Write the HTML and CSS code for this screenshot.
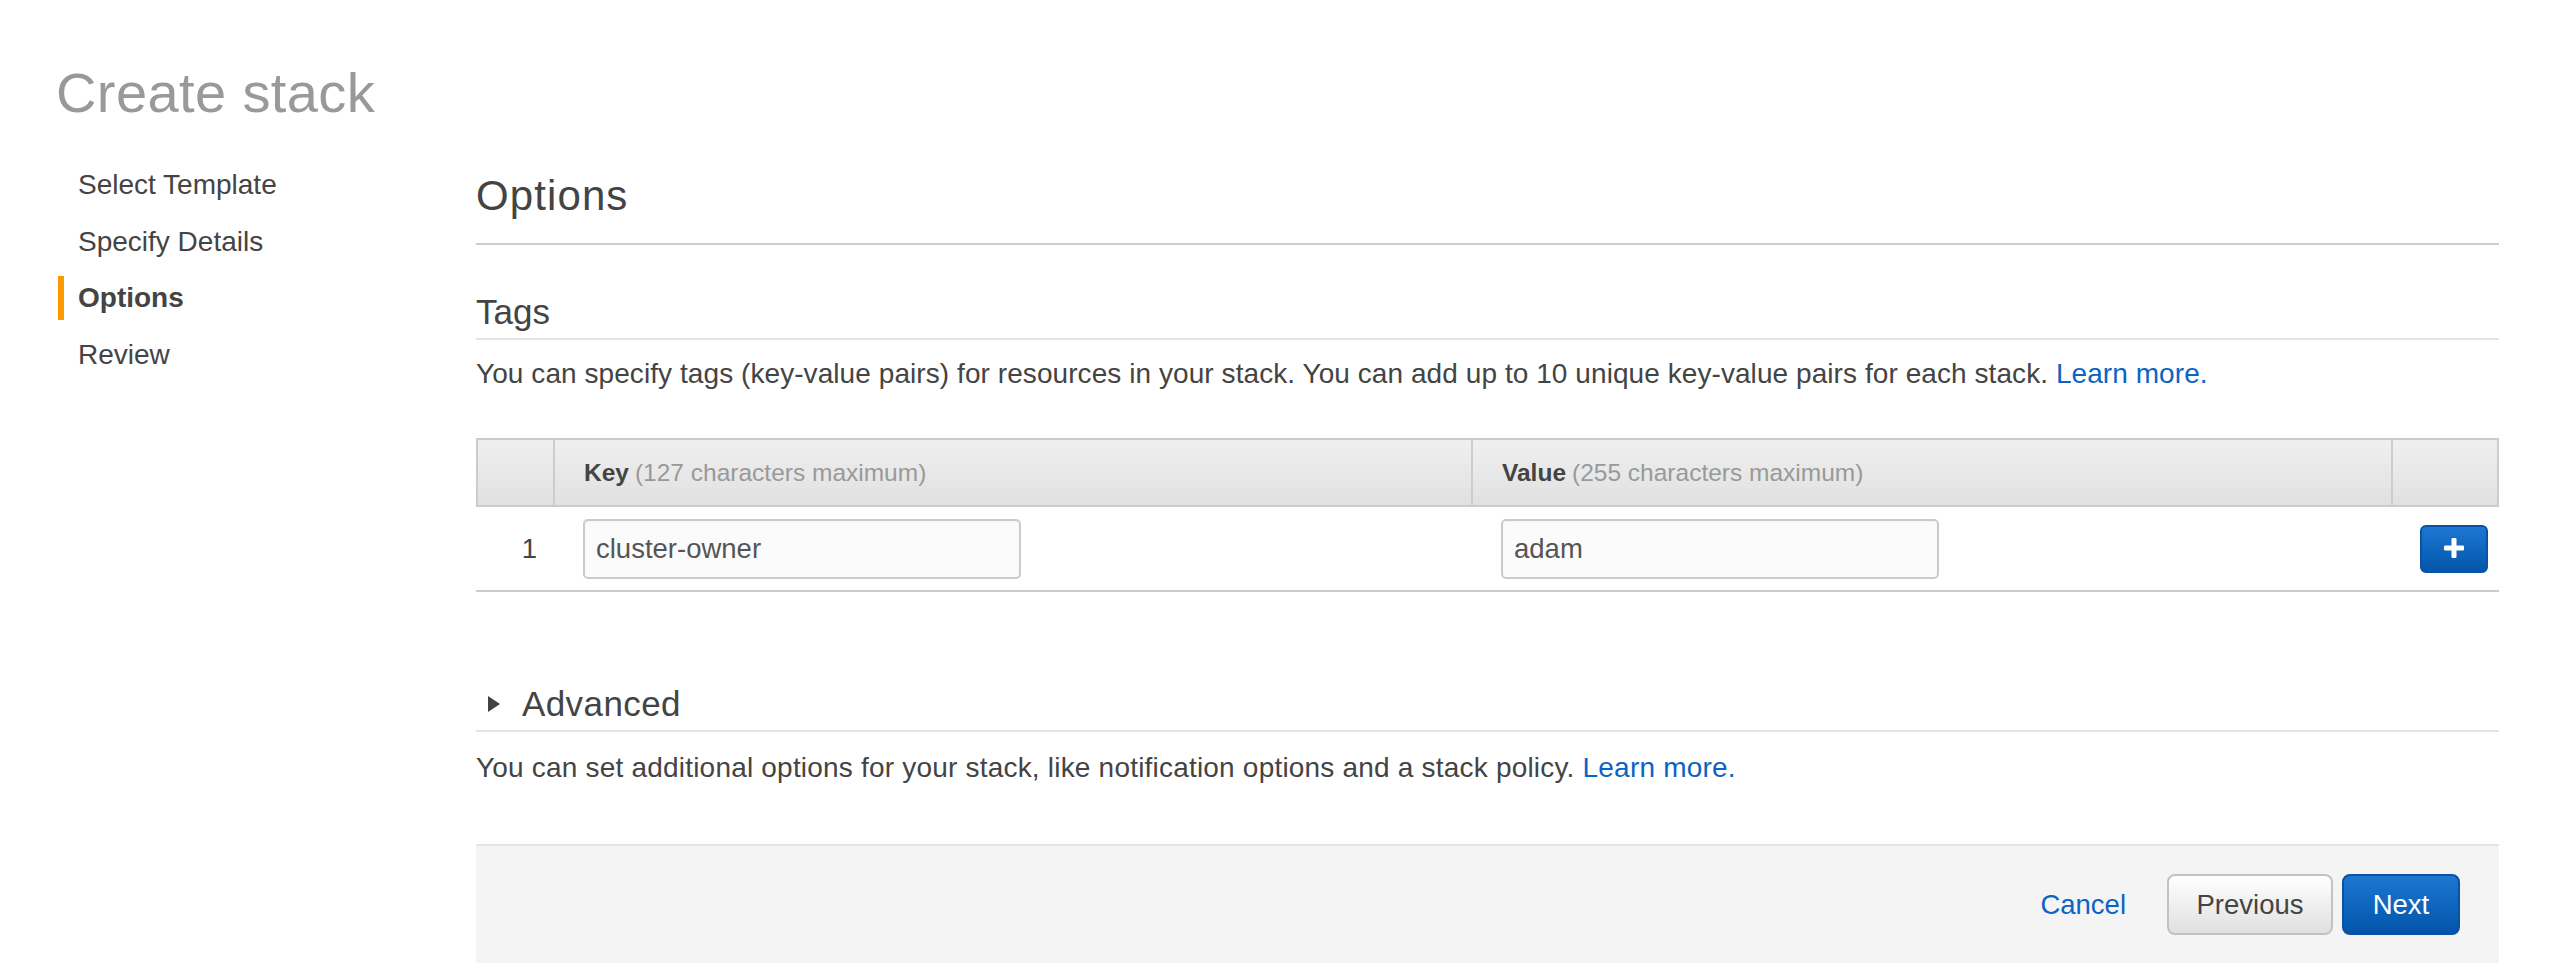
FILE: index.html
```html
<!DOCTYPE html>
<html lang="en">
<head>
<meta charset="utf-8">
<title>Create stack</title>
<link rel="stylesheet" href="styles.css">
</head>
<body>
<div class="page">
  <h1 class="page-title">Create stack</h1>
  <div class="layout">
    <nav class="steps">
      <div class="step">Select Template</div>
      <div class="step">Specify Details</div>
      <div class="step active">Options</div>
      <div class="step">Review</div>
    </nav>
    <main class="content">
      <h2 class="section-title">Options</h2>

      <h3 class="sub-title">Tags</h3>
      <p class="desc desc-tags">You can specify tags (key-value pairs) for resources in your stack. You can add up to 10 unique key-value pairs for each stack. <a href="#" class="link">Learn more.</a></p>

      <div class="tags">
        <div class="tags-head">
          <div class="hcell"></div>
          <div class="hcell"><b>Key</b> <span class="hint">(127 characters maximum)</span></div>
          <div class="hcell"><b>Value</b> <span class="hint">(255 characters maximum)</span></div>
          <div class="hcell"></div>
        </div>
        <div class="tags-row">
          <div class="rcell num">1</div>
          <div class="rcell field"><input class="text-input" type="text" value="cluster-owner"></div>
          <div class="rcell field"><input class="text-input" type="text" value="adam"></div>
          <div class="rcell add">
            <button class="btn-add" type="button" aria-label="Add tag">
              <svg width="20" height="20" viewBox="0 0 20 20"><rect x="7.5" y="0" width="5" height="20" rx="1.2" fill="#fff"/><rect x="0" y="7.5" width="20" height="5" rx="1.2" fill="#fff"/></svg>
            </button>
          </div>
        </div>
      </div>

      <h3 class="sub-title advanced"><span class="caret"></span>Advanced</h3>
      <p class="desc desc-adv">You can set additional options for your stack, like notification options and a stack policy. <a href="#" class="link">Learn more.</a></p>

      <div class="footer">
        <a href="#" class="link cancel">Cancel</a>
        <button class="btn btn-secondary" type="button">Previous</button>
        <button class="btn btn-primary" type="button">Next</button>
      </div>
    </main>
  </div>
</div>
</body>
</html>
```

FILE: styles.css
```css
* { box-sizing: border-box; }

html, body {
  margin: 0;
  padding: 0;
  background: #fff;
}

body {
  font-family: "Liberation Sans", Arial, Helvetica, sans-serif;
  color: #444;
  font-size: 27.5px;
}

.page {
  padding: 61px 57px 0 58px;
}

.page-title {
  margin: 0 0 0 -2px;
  font-size: 56px;
  line-height: 64px;
  font-weight: normal;
  color: #999;
  letter-spacing: 0.4px;
}

.layout {
  display: flex;
  align-items: flex-start;
}

.steps {
  width: 418px;
  flex: none;
  padding-top: 32px;
}

.step {
  display: flex;
  align-items: center;
  gap: 14px;
  height: 56.5px;
  font-size: 28px;
  line-height: 56.5px;
  color: #444;
}

.step::before {
  content: "";
  display: block;
  width: 6px;
  height: 44px;
  background: transparent;
  flex: none;
}

.step.active {
  font-weight: bold;
}

.step.active::before {
  background: #f90;
}

.content {
  flex: 1;
  min-width: 0;
}

.section-title {
  margin: 46px 0 0;
  font-size: 42px;
  line-height: 50px;
  font-weight: normal;
  color: #444;
  letter-spacing: 1.1px;
  padding-bottom: 22px;
  border-bottom: 2px solid #cdcdcd;
}

.sub-title {
  margin: 46px 0 0;
  font-size: 35px;
  line-height: 42px;
  font-weight: normal;
  color: #444;
  padding-bottom: 5px;
  border-bottom: 2px solid #e4e4e4;
}

.desc {
  margin: 13.5px 0 0;
  font-size: 28px;
  line-height: 40px;
  color: #444;
}

.desc-tags {
  letter-spacing: 0.07px;
}

.link {
  color: #0b64c4;
  text-decoration: none;
}

/* Tags table */
.tags {
  margin-top: 44.5px;
}

.tags-head {
  display: grid;
  grid-template-columns: 75px 918px 920px 1fr;
  border: 2px solid #cccccc;
  background: linear-gradient(#efefef, #e1e1e1);
  height: 69px;
}

.hcell {
  display: flex;
  align-items: center;
  padding-left: 29px;
  font-size: 24.5px;
  color: #999;
  white-space: nowrap;
}

.hcell + .hcell {
  border-left: 2px solid #cccccc;
}

.hcell b {
  color: #444;
  margin-right: 6px;
}

.tags-row {
  display: grid;
  grid-template-columns: 77px 918px 920px 1fr;
  height: 85px;
  border-bottom: 2px solid #cccccc;
  align-items: center;
}

.rcell.num {
  text-align: right;
  padding-right: 16px;
  font-size: 27.5px;
  color: #444;
}

.rcell.field {
  padding-left: 30px;
  display: flex;
  align-items: center;
}

.text-input {
  width: 438px;
  height: 60px;
  border: 2px solid #cbcbcb;
  border-radius: 5px;
  background: #fbfbfb;
  box-shadow: inset 0 1px 2px rgba(0, 0, 0, 0.04);
  padding: 0 11px;
  font-family: "Liberation Sans", Arial, Helvetica, sans-serif;
  font-size: 27.5px;
  color: #555;
  outline: none;
}

.rcell.add {
  display: flex;
  justify-content: flex-end;
  padding-right: 11px;
}

.btn-add {
  width: 68px;
  height: 48px;
  border: 2px solid #0a52a3;
  border-radius: 6px;
  background: linear-gradient(#1d77d3, #0255aa);
  display: flex;
  align-items: center;
  justify-content: center;
  padding: 0;
  cursor: pointer;
}

.btn-add svg {
  display: block;
  margin-top: -2px;
}

/* Advanced */
.sub-title.advanced {
  margin-top: 91px;
  display: flex;
  align-items: center;
  letter-spacing: 0.4px;
}

.caret {
  display: block;
  width: 0;
  height: 0;
  border-left: 12px solid #444;
  border-top: 8px solid transparent;
  border-bottom: 8px solid transparent;
  margin-left: 12px;
  margin-right: 22px;
}

.desc-adv {
  margin-top: 15.5px;
  letter-spacing: 0.2px;
}

/* Footer */
.footer {
  margin-top: 56.5px;
  background: #f4f4f4;
  border-top: 2px solid #e5e5e5;
  padding: 28px 39px 28px 0;
  display: flex;
  justify-content: flex-end;
  align-items: center;
}

.cancel {
  font-size: 27.5px;
  margin-right: 41px;
}

.btn {
  height: 61px;
  border-radius: 8px;
  font-family: "Liberation Sans", Arial, Helvetica, sans-serif;
  font-size: 27.5px;
  padding: 0;
  cursor: pointer;
}

.btn-secondary {
  width: 166px;
  border: 2px solid #c2c2c2;
  background: linear-gradient(#ffffff, #e0e0e0);
  color: #444;
  margin-right: 9px;
}

.btn-primary {
  width: 118px;
  border: 2px solid #0a52a3;
  background: linear-gradient(#1d77d3, #0255aa);
  color: #fff;
}
```
